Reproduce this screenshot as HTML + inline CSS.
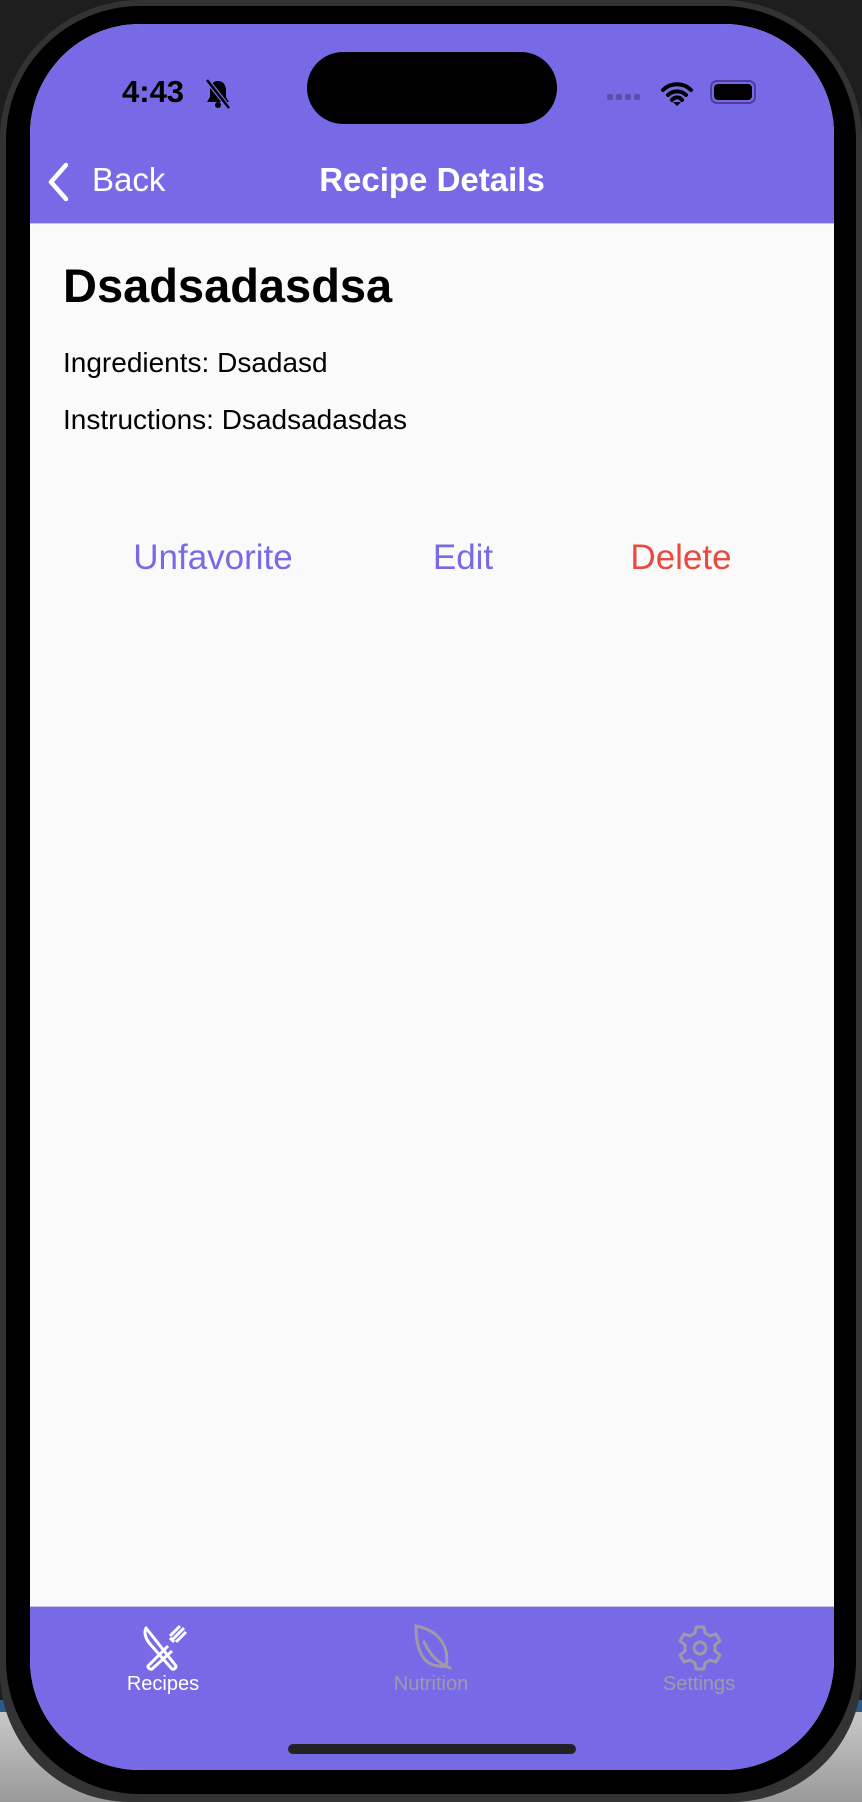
<!DOCTYPE html>
<html><head><meta charset="utf-8"><style>
*{margin:0;padding:0;box-sizing:border-box}
body{width:862px;height:1802px;background:#1e1e1e;position:relative;overflow:hidden;font-family:"Liberation Sans",sans-serif}
.paper{position:absolute;left:0;top:1712px;width:862px;height:90px;background:linear-gradient(#c8c8c8,#9a9a9a)}
.blue{position:absolute;left:0;top:1700px;width:862px;height:14px;background:#2a5b8a}
.frame{position:absolute;left:0;top:0;width:862px;height:1802px;border-radius:140px 140px 130px 130px;background:#333}
.bezel{position:absolute;left:6px;top:6px;width:850px;height:1788px;border-radius:134px;background:#000}
.screen{position:absolute;left:30px;top:24px;width:804px;height:1746px;border-radius:110px;overflow:hidden;background:#fafafa}
.top{position:absolute;left:0;top:0;width:804px;height:200px;background:#786ae6;border-bottom:1px solid #c9c4ee}
.tab{position:absolute;left:0;top:1582px;width:804px;height:164px;background:#786ae6;border-top:1px solid #c9c4ee}
.island{position:absolute;left:277px;top:28px;width:250px;height:72px;border-radius:36px;background:#000}
.time{position:absolute;left:92px;top:50px;font-size:31px;font-weight:bold;color:#000}
.nav{position:absolute;top:137px;font-size:33px;color:#fff}
.h1{position:absolute;left:33px;top:234px;font-size:47px;font-weight:bold;color:#000}
.p{position:absolute;left:33px;font-size:28px;color:#000}
.btn{position:absolute;top:514px;font-size:35px;transform:translateX(-50%)}
.tl{position:absolute;top:1649px;font-size:20px;transform:translateX(-50%)}
</style></head><body>
<div class="blue"></div><div class="paper"></div>
<div class="frame"></div><div class="bezel"></div>
<div class="screen">
<div class="top"></div>
<div class="island"></div>
<div class="time">4:43</div>
<svg style="position:absolute;left:174px;top:54px" width="28" height="32" viewBox="0 0 28 32"><path d="M14 3c-5 0-8 4-8 9v7l-3 5h22l-3-5v-7c0-5-3-9-8-9z" fill="#000"/><circle cx="14" cy="27" r="3" fill="#000"/><path d="M3 2l22 28" stroke="#786ae6" stroke-width="5"/><path d="M3 2l22 28" stroke="#000" stroke-width="2.5"/></svg>
<div style="position:absolute;left:577px;top:70px;display:flex;gap:3px"><i style="width:6px;height:6px;border-radius:2px;background:#5a4fb0"></i><i style="width:6px;height:6px;border-radius:2px;background:#5a4fb0"></i><i style="width:6px;height:6px;border-radius:2px;background:#5a4fb0"></i><i style="width:6px;height:6px;border-radius:2px;background:#5a4fb0"></i></div>
<svg style="position:absolute;left:630px;top:56px" width="34" height="28" viewBox="0 0 34 28"><path d="M3 10a20 20 0 0 1 28 0M8 15a13 13 0 0 1 18 0M12 20a6 6 0 0 1 10 0" stroke="#000" stroke-width="4" fill="none" stroke-linecap="round"/><path d="M13 22l4 4 4-4z" fill="#000"/></svg>
<div style="position:absolute;left:680px;top:56px;width:46px;height:24px;border:2px solid #4a3fa0;border-radius:7px;padding:2px"><div style="width:100%;height:100%;background:#000;border-radius:4px"></div></div>
<svg style="position:absolute;left:16px;top:138px" width="24" height="40" viewBox="0 0 24 40"><path d="M20 3L5 20l15 17" stroke="#fff" stroke-width="4.5" fill="none" stroke-linecap="round" stroke-linejoin="round"/></svg>
<div class="nav" style="left:62px">Back</div>
<div class="nav" style="left:402px;transform:translateX(-50%);font-weight:bold">Recipe Details</div>
<div class="h1">Dsadsadasdsa</div>
<div class="p" style="top:323px">Ingredients: Dsadasd</div>
<div class="p" style="top:380px">Instructions: Dsadsadasdas</div>
<div class="btn" style="left:183px;color:#786ae6">Unfavorite</div>
<div class="btn" style="left:433px;color:#786ae6">Edit</div>
<div class="btn" style="left:651px;color:#e84a3e">Delete</div>
<div class="tab"></div>
<svg style="position:absolute;left:110px;top:1600px" width="50" height="50" viewBox="0 0 50 50" fill="none" stroke="#fff" stroke-width="3" stroke-linejoin="round"><path d="M6 4l30 38a3 3 0 0 1-4 3L10 20C5 14 4 8 6 4z"/><path d="M44 4l-12 12M40 2l-10 10M46 8l-10 10M30 14l4 4M28 22L8 42a3 3 0 0 0 4 3l20-18"/></svg>
<svg style="position:absolute;left:376px;top:1598px" width="50" height="56" viewBox="0 0 50 56" fill="none" stroke="#a09aa8" stroke-width="3" stroke-linecap="round"><path d="M10 4c22 4 34 20 30 40-18 2-30-8-30-40zM18 20c6 12 12 20 26 26"/></svg>
<svg style="position:absolute;left:646px;top:1600px" width="48" height="48" viewBox="0 0 48 48" fill="none" stroke="#a09aa8" stroke-width="3" stroke-linejoin="round"><path d="M20 3h8l1 6 5 3 6-2 4 7-5 4v6l5 4-4 7-6-2-5 3-1 6h-8l-1-6-5-3-6 2-4-7 5-4v-6l-5-4 4-7 6 2 5-3z"/><circle cx="24" cy="24" r="6"/></svg>
<div class="tl" style="left:133px;color:#fff">Recipes</div>
<div class="tl" style="left:401px;color:#a09aa8">Nutrition</div>
<div class="tl" style="left:669px;color:#a09aa8">Settings</div>
<div style="position:absolute;left:258px;top:1720px;width:288px;height:10px;border-radius:5px;background:#222"></div>
</div>
</body></html>
